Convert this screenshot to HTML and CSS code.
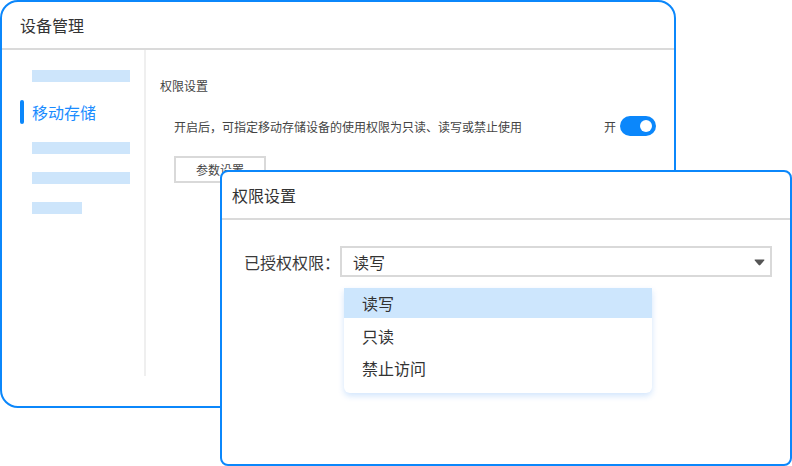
FILE: index.html
```html
<!DOCTYPE html>
<html lang="zh">
<head>
<meta charset="utf-8">
<title>设备管理</title>
<link rel="stylesheet" href="styles.css">
</head>
<body>
<div class="desktop">
  <div class="win win-main">
    <div class="win-head">设备管理</div>
    <div class="main-body">
      <div class="sidebar">
        <div class="bar"></div>
        <div class="nav-active"><span class="indicator"></span><span class="nav-text">移动存储</span></div>
        <div class="bar"></div>
        <div class="bar"></div>
        <div class="bar bar-short"></div>
      </div>
      <div class="content">
        <div class="section-title">权限设置</div>
        <div class="row">
          <span class="desc">开启后，可指定移动存储设备的使用权限为只读、读写或禁止使用</span>
          <span class="switch-wrap"><span class="switch-label">开</span><span class="switch"><span class="knob"></span></span></span>
        </div>
        <div class="btn">参数设置</div>
      </div>
    </div>
  </div>

  <div class="win win-dialog">
    <div class="win-head dialog-head">权限设置</div>
    <div class="dialog-body">
      <div class="form-row">
        <span class="label">已授权权限：</span>
        <div class="select">
          <span>读写</span>
          <svg class="caret" width="11" height="7" viewBox="0 0 11 7"><path d="M1.2 0.5 H9.8 Q10.9 0.5 10.2 1.5 L6.3 6 Q5.5 6.8 4.7 6 L0.8 1.5 Q0.1 0.5 1.2 0.5 Z" fill="#555"/></svg>
        </div>
      </div>
      <div class="dropdown">
        <div class="opt opt-active">读写</div>
        <div class="opt">只读</div>
        <div class="opt">禁止访问</div>
      </div>
    </div>
  </div>
</div>
</body>
</html>
```

FILE: styles.css
```css
* { box-sizing: border-box; }
html, body { margin: 0; padding: 0; background: #fff; }
body {
  font-family: "Noto Sans CJK SC", "Noto Sans", sans-serif;
  color: #3a3a3a;
}
.desktop {
  position: relative;
  width: 792px;
  height: 466px;
  overflow: hidden;
}
.win {
  position: absolute;
  background: #fff;
  border: 2px solid #0b87fb;
  overflow: hidden;
}
.win-main {
  left: 0;
  top: 0;
  width: 676px;
  height: 408px;
  border-radius: 18px;
}
.win-head {
  height: 48px;
  border-bottom: 2px solid #dadada;
  padding-left: 18px;
  font-size: 16px;
  line-height: 46px;
  color: #333;
}
.main-body {
  display: flex;
  align-items: flex-start;
}
.sidebar {
  width: 144px;
  height: 326px;
  border-right: 2px solid #efefef;
  padding-top: 20px;
  display: flex;
  flex-direction: column;
  gap: 18px;
}
.bar {
  margin-left: 30px;
  width: 98px;
  height: 12px;
  background: #cde5fb;
}
.bar-short { width: 50px; }
.nav-active {
  display: flex;
  align-items: center;
  height: 24px;
}
.indicator {
  margin-left: 18px;
  width: 4px;
  height: 24px;
  border-radius: 2px;
  background: #0b87fb;
}
.nav-text {
  margin-left: 8px;
  font-size: 16px;
  color: #1a8cff;
  line-height: 24px;
}
.content {
  flex: 1;
  padding: 26px 18px 0 14px;
}
.section-title {
  font-size: 12px;
  line-height: 20px;
  color: #444;
}
.row {
  margin-top: 20px;
  padding-left: 14px;
  display: flex;
  align-items: center;
  justify-content: space-between;
  height: 20px;
}
.desc {
  font-size: 12px;
  color: #444;
}
.switch-wrap {
  display: flex;
  align-items: center;
  gap: 4px;
}
.switch-label {
  font-size: 12px;
  color: #444;
}
.switch {
  display: flex;
  align-items: center;
  justify-content: flex-end;
  width: 36px;
  height: 20px;
  border-radius: 10px;
  background: #0b87fb;
  padding-right: 4px;
}
.knob {
  width: 12px;
  height: 12px;
  border-radius: 50%;
  background: #fff;
}
.btn {
  margin: 20px 0 0 14px;
  width: 92px;
  height: 27px;
  border: 2px solid #d9d9d9;
  font-size: 12px;
  line-height: 23px;
  text-align: center;
  color: #444;
}
.win-dialog {
  left: 220px;
  top: 170px;
  width: 572px;
  height: 296px;
  border-radius: 8px;
  z-index: 2;
}
.dialog-head { padding-left: 10px; }
.dialog-body {
  position: relative;
  padding: 26px 18px 0 22px;
}
.form-row {
  display: flex;
  align-items: center;
}
.label {
  width: 96px;
  font-size: 16px;
  color: #3a3a3a;
  white-space: nowrap;
}
.select {
  flex: 1;
  height: 31px;
  border: 2px solid #d9d9d9;
  display: flex;
  align-items: center;
  justify-content: space-between;
  padding: 0 5px 0 11px;
  font-size: 16px;
  color: #333;
}
.caret { display: block; margin-top: 1px; }
.dropdown {
  position: absolute;
  left: 122px;
  top: 68px;
  width: 308px;
  padding-bottom: 9px;
  background: #fff;
  border-radius: 0 0 6px 6px;
  box-shadow: 0 3px 6px rgba(0, 110, 240, 0.18);
}
.opt {
  height: 32px;
  line-height: 32px;
  padding-left: 18px;
  font-size: 16px;
  color: #333;
}
.opt-active {
  height: 30px;
  line-height: 30px;
  margin-bottom: 2px;
  background: #cde6fd;
}
```
